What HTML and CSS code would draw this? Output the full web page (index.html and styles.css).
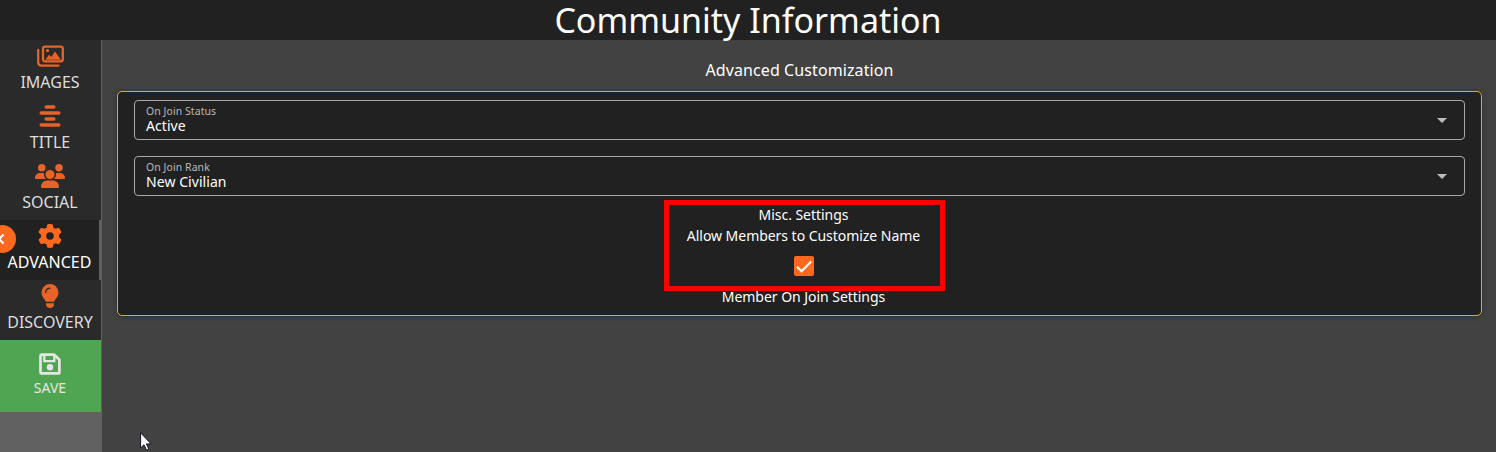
FILE: index.html
```html
<!DOCTYPE html>
<html lang="en">
<head>
<meta charset="utf-8">
<title>Community Information</title>
<link rel="stylesheet" href="styles.css">
</head>
<body>
<header class="toolbar"><h1 class="toolbar-title">Community Information</h1></header>
<div class="layout">
  <nav class="sidebar">
    <div class="tabs">
      <a class="tab"><svg class="tab-icon wide" viewBox="0 0 27 24"><g fill="none" stroke="currentColor" stroke-width="2.300"><rect x="6" y="2.700" width="19.800" height="14.600" rx="2"/><path d="M1.200 6v12.300q0 3.300 3.300 3.300H21.500" stroke-linecap="round"/></g><circle cx="10.500" cy="6.700" r="1.600" fill="currentColor"/><path fill="currentColor" d="M8.300 15.800l3.700-5 2.300 2.300 3.700-5.600 5.900 8.300z"/></svg><span class="tab-label">IMAGES</span></a>
      <a class="tab"><svg class="tab-icon" viewBox="0 0 24 24"><path d="M8.200 3h7.600M3.200 9h17.600M8.200 15h7.600M3.200 21h17.600" stroke="currentColor" stroke-width="3.500" stroke-linecap="round"/></svg><span class="tab-label">TITLE</span></a>
      <a class="tab"><svg class="tab-icon social" viewBox="0 0 640 512"><path fill="currentColor" d="M144 0a80 80 0 1 1 0 160A80 80 0 1 1 144 0zM512 0a80 80 0 1 1 0 160A80 80 0 1 1 512 0zM0 298.700C0 239.800 47.800 192 106.700 192h42.700c15.900 0 31 3.500 44.600 9.700c-1.300 7.200-1.900 14.700-1.900 22.300c0 38.200 16.800 72.500 43.300 96H21.300C9.600 320 0 310.400 0 298.700zM405.300 320h-.7c26.600-23.500 43.300-57.800 43.300-96c0-7.600-.7-15-1.900-22.300c13.600-6.300 28.700-9.700 44.600-9.700h42.700C592.200 192 640 239.800 640 298.700c0 11.800-9.600 21.300-21.300 21.300H405.300zM224 224a96 96 0 1 1 192 0 96 96 0 1 1-192 0zM128 485.300C128 411.700 187.700 352 261.300 352H378.700C452.300 352 512 411.700 512 485.300c0 14.700-11.900 26.700-26.700 26.700H154.700c-14.700 0-26.700-11.900-26.700-26.700z"/></svg><span class="tab-label">SOCIAL</span></a>
      <a class="tab active"><svg class="tab-icon" viewBox="0 0 512 512"><path fill="currentColor" d="M495.900 166.600c3.200 8.700.5 18.400-6.400 24.600l-43.300 39.400c1.100 8.300 1.700 16.800 1.700 25.400s-.6 17.100-1.700 25.400l43.300 39.400c6.900 6.200 9.600 15.900 6.400 24.600c-4.400 11.900-9.700 23.300-15.800 34.300l-4.700 8.100c-6.600 11-14 21.400-22.100 31.200c-5.900 7.200-15.700 9.600-24.500 6.800l-55.700-17.700c-13.400 10.300-28.200 18.900-44 25.400l-12.500 57.100c-2 9.100-9 16.300-18.200 17.800c-13.800 2.300-28 3.500-42.500 3.500s-28.700-1.200-42.500-3.500c-9.200-1.500-16.200-8.700-18.200-17.800l-12.500-57.100c-15.800-6.500-30.600-15.100-44-25.400L83.100 425.900c-8.800 2.800-18.600.3-24.500-6.800c-8.100-9.800-15.500-20.200-22.100-31.200l-4.700-8.100c-6.100-11-11.400-22.400-15.800-34.300c-3.200-8.700-.5-18.400 6.400-24.600l43.300-39.400C64.600 273.100 64 264.600 64 256s.6-17.100 1.700-25.400L22.400 191.200c-6.900-6.200-9.600-15.900-6.400-24.600c4.400-11.900 9.700-23.300 15.800-34.300l4.700-8.100c6.600-11 14-21.400 22.100-31.200c5.900-7.200 15.700-9.600 24.500-6.800l55.700 17.700c13.400-10.300 28.200-18.900 44-25.400l12.500-57.100c2-9.100 9-16.300 18.200-17.800C227.300 1.200 241.500 0 256 0s28.700 1.200 42.500 3.500c9.200 1.500 16.200 8.700 18.200 17.800l12.500 57.100c15.800 6.500 30.600 15.100 44 25.400l55.700-17.700c8.800-2.800 18.600-.3 24.500 6.800c8.100 9.800 15.500 20.200 22.100 31.200l4.700 8.100c6.100 11 11.400 22.400 15.800 34.300zM256 336a80 80 0 1 0 0-160 80 80 0 1 0 0 160z"/></svg><span class="tab-label">ADVANCED</span></a>
      <a class="tab"><svg class="tab-icon" viewBox="0 0 24 24"><path fill="currentColor" d="M7.700 17.700c-.4-2.600-4.200-4.500-4.200-9.200a8.500 8.500 0 0 1 17 0c0 4.700-3.800 6.600-4.200 9.200zM8 19.200h8v.8a4 4 0 0 1-8 0z"/><path d="M7.600 8.500q.3-3.800 4.200-4.400" fill="none" stroke="#2a2a2a" stroke-width="1.300" stroke-linecap="round"/></svg><span class="tab-label">DISCOVERY</span></a>
      <span class="collapse"><svg class="chevron" viewBox="0 0 8 12"><path d="M6.500 1.500L2 6l4.500 4.500" fill="none" stroke="currentColor" stroke-width="2.200"/></svg></span>
    </div>
    <a class="save"><svg class="save-icon" viewBox="0 0 24 24"><path fill="none" stroke="currentColor" stroke-width="2.700" stroke-linejoin="round" d="M4 2.600h12.300l5.100 5.100v12.200q0 1.500-1.500 1.500H4q-1.500 0-1.500-1.500V4.100q0-1.500 1.500-1.500z"/><path fill="none" stroke="currentColor" stroke-width="2.300" d="M6.300 3v6.200h10V3"/><circle cx="12" cy="15.300" r="3.200" fill="currentColor"/></svg><span class="save-label">SAVE</span></a>
  </nav>
  <main class="content">
    <h2 class="heading">Advanced Customization</h2>
    <section class="card">
      <div class="select"><div class="select-text"><span class="select-label">On Join Status</span><span class="select-value">Active</span></div><i class="arrow"></i></div>
      <div class="select"><div class="select-text"><span class="select-label">On Join Rank</span><span class="select-value">New Civilian</span></div><i class="arrow"></i></div>
      <div class="misc">
        <div class="misc-title">Misc. Settings</div>
        <div class="misc-option">Allow Members to Customize Name</div>
        <span class="checkbox"><svg viewBox="0 0 20 20"><path d="M3 10.700l4.500 4.500L17.200 5.400" fill="none" stroke="#fff" stroke-width="2.100"/></svg></span>
        <div class="join-title">Member On Join Settings</div>
        <div class="highlight"></div>
      </div>
    </section>
  </main>
</div>
<svg class="cursor" viewBox="0 0 12 19"><path d="M.6.800v15.200l3.400-3.200 2.600 5.400 2.300-1.100-2.500-5.200h4.700z" fill="#fff" stroke="#111122" stroke-width="1"/></svg>
</body>
</html>
```
FILE: styles.css
```css
* { box-sizing: border-box; }
body { margin: 0; height: 452px; overflow: hidden; background: #424242; color: #fff; font-family: "Noto Sans", sans-serif; display: flex; flex-direction: column; }
.toolbar { height: 40px; flex: none; background: #212121; display: flex; justify-content: center; }
.toolbar-title { margin: 0; font-size: 34px; font-weight: 400; line-height: 40px; white-space: nowrap; }
.layout { flex: 1; display: flex; }
.sidebar { width: 102px; flex: none; background: #616161; border-right: 1px solid #616161; }
.tabs { position: relative; overflow: hidden; }
.tab { height: 60px; display: flex; flex-direction: column; align-items: center; padding-top: 4px; background: #2a2a2a; color: #e66428; font-size: 16px; line-height: 24px; padding-right: 1px; }
.tab-icon { width: 24px; height: 24px; flex: none; }
.tab-icon.wide { width: 27px; }
.tab-icon.social { width: 30px; }
.tab-label { color: #dedede; white-space: nowrap; margin-top: 2px; }
.tab.active { background: #212121; color: #ff681d; border-right: 2px solid #616161; padding-right: 0; }
.active .tab-label { color: #fff; }
.collapse { position: absolute; left: -12px; top: 185px; width: 28px; height: 28px; border-radius: 50%; background: #ff681d; }
.chevron { position: absolute; left: 9px; top: 8px; width: 8px; height: 12px; color: #fff; }
.save { height: 72px; background: #50a553; color: #e4e8e4; display: flex; flex-direction: column; align-items: center; padding: 12px 1px 0 0; }
.save-icon { width: 24px; height: 24px; }
.save-label { font-size: 14px; line-height: 20px; margin-top: 2px; }
.content { flex: 1; padding: 18px 14px 0 15px; }
.heading { margin: 0 0 9px; font-size: 16px; font-weight: 400; line-height: 24px; text-align: center; letter-spacing: .1px; }
.card { height: 225px; background: #212121; border: 1px solid #ffa500; border-radius: 5px; padding: 8px 16px; box-shadow: 0 1px 5px rgba(0,0,0,.3); }
.select { height: 40px; border: 1px solid #a9a9a9; border-radius: 4px; margin-bottom: 16px; padding: 4px 17.5px 0 11px; display: flex; justify-content: space-between; }
.select-text { display: flex; flex-direction: column; }
.select-label { color: #b8b8b8; font-size: 10.5px; line-height: 13px; letter-spacing: .06px; }
.select-value { font-size: 14px; line-height: 16px; letter-spacing: .06px; }
.arrow { width: 0; height: 0; margin-top: 13px; border: 5px solid transparent; border-top-color: #bdbdbd; border-bottom: 0; }
.misc { position: relative; margin-top: -7px; font-size: 14px; line-height: 20px; letter-spacing: -.04px; display: flex; flex-direction: column; align-items: center; padding-left: 8px; }
.misc-option { margin-top: 1px; }
.checkbox { width: 20px; height: 20px; margin-top: 10px; border-radius: 2px; background: #ff681d; }
.checkbox svg { display: block; }
.join-title { margin-top: 11px; }
.highlight { position: absolute; left: 530px; top: -5px; width: 281px; height: 91px; border: 5px solid #f00; }
.cursor { position: absolute; left: 140px; top: 432px; width: 12px; height: 19px; }
```
